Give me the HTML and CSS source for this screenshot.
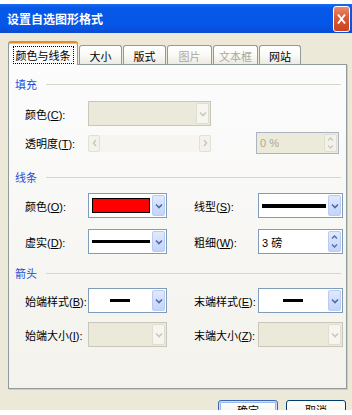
FILE: index.html
```html
<!DOCTYPE html>
<html lang="zh-CN">
<head>
<meta charset="utf-8">
<title>设置自选图形格式</title>
<link rel="stylesheet" href="styles.css">
</head>
<body>
<div class="dialog">
  <div class="titlebar">
    <span class="title">设置自选图形格式</span>
    <span class="close"><svg width="9" height="12" viewBox="0 0 9 12"><path d="M1 1.5L8 10.5M8 1.5L1 10.5" fill="none" stroke="#fff" stroke-width="2"/></svg></span>
  </div>
  <div class="client">
    <div class="tabs">
      <div class="tab active"><span class="focus">颜色与线条</span></div>
      <div class="tab w43">大小</div>
      <div class="tab w43">版式</div>
      <div class="tab w45 off">图片</div>
      <div class="tab w45 off">文本框</div>
      <div class="tab w42">网站</div>
    </div>
    <div class="panel">
      <div class="group-head g1"><span>填充</span><i></i></div>
      <div class="grid fill">
        <label>颜色(<u>C</u>):</label>
        <div class="combo disabled"><span class="field"></span><span class="drop"><svg width="8" height="6" viewBox="0 0 8 6"><path d="M1 1.5L4 4.5L7 1.5" fill="none" stroke="currentColor" stroke-width="1.6"/></svg></span></div>
        <label class="r2">透明度(<u>T</u>):</label>
        <div class="slider r2c2">
          <span class="sb"><svg width="5" height="8" viewBox="0 0 5 8"><path d="M4 1L1.5 4L4 7" fill="none" stroke="currentColor" stroke-width="1.4"/></svg></span>
          <span class="track"></span>
          <span class="sb"><svg width="5" height="8" viewBox="0 0 5 8"><path d="M1 1L3.5 4L1 7" fill="none" stroke="currentColor" stroke-width="1.4"/></svg></span>
        </div>
        <div class="spin disabled r2c4">
          <span class="val">0 %</span>
          <span class="btns">
            <span class="half"><svg width="7" height="4" viewBox="0 0 7 4"><path d="M1 3.5L3.5 1L6 3.5" fill="none" stroke="currentColor" stroke-width="1.3"/></svg></span>
            <span class="half"><svg width="7" height="4" viewBox="0 0 7 4"><path d="M1 0.5L3.5 3L6 0.5" fill="none" stroke="currentColor" stroke-width="1.3"/></svg></span>
          </span>
        </div>
      </div>

      <div class="group-head g2"><span>线条</span><i></i></div>
      <div class="grid lines">
        <label>颜色(<u>O</u>):</label>
        <div class="combo"><span class="field"><span class="swatch"></span></span><span class="drop"><svg width="8" height="6" viewBox="0 0 8 6"><path d="M1 1.5L4 4.5L7 1.5" fill="none" stroke="currentColor" stroke-width="1.6"/></svg></span></div>
        <label class="c4">线型(<u>S</u>):</label>
        <div class="combo"><span class="field"><span class="ln thick"></span></span><span class="drop"><svg width="8" height="6" viewBox="0 0 8 6"><path d="M1 1.5L4 4.5L7 1.5" fill="none" stroke="currentColor" stroke-width="1.6"/></svg></span></div>
        <label>虚实(<u>D</u>):</label>
        <div class="combo"><span class="field"><span class="ln"></span></span><span class="drop"><svg width="8" height="6" viewBox="0 0 8 6"><path d="M1 1.5L4 4.5L7 1.5" fill="none" stroke="currentColor" stroke-width="1.6"/></svg></span></div>
        <label class="c4">粗细(<u>W</u>):</label>
        <div class="spin">
          <span class="val">3 磅</span>
          <span class="btns">
            <span class="half"><svg width="7" height="4" viewBox="0 0 7 4"><path d="M1 3.5L3.5 1L6 3.5" fill="none" stroke="currentColor" stroke-width="1.3"/></svg></span>
            <span class="half"><svg width="7" height="4" viewBox="0 0 7 4"><path d="M1 0.5L3.5 3L6 0.5" fill="none" stroke="currentColor" stroke-width="1.3"/></svg></span>
          </span>
        </div>
      </div>

      <div class="group-head g3"><span>箭头</span><i></i></div>
      <div class="grid arrows">
        <label>始端样式(<u>B</u>):</label>
        <div class="combo"><span class="field"><span class="short"></span></span><span class="drop"><svg width="8" height="6" viewBox="0 0 8 6"><path d="M1 1.5L4 4.5L7 1.5" fill="none" stroke="currentColor" stroke-width="1.6"/></svg></span></div>
        <label class="c4">末端样式(<u>E</u>):</label>
        <div class="combo"><span class="field"><span class="short"></span></span><span class="drop"><svg width="8" height="6" viewBox="0 0 8 6"><path d="M1 1.5L4 4.5L7 1.5" fill="none" stroke="currentColor" stroke-width="1.6"/></svg></span></div>
        <label>始端大小(<u>I</u>):</label>
        <div class="combo disabled"><span class="field"></span><span class="drop"><svg width="8" height="6" viewBox="0 0 8 6"><path d="M1 1.5L4 4.5L7 1.5" fill="none" stroke="currentColor" stroke-width="1.6"/></svg></span></div>
        <label class="c4">末端大小(<u>Z</u>):</label>
        <div class="combo disabled"><span class="field"></span><span class="drop"><svg width="8" height="6" viewBox="0 0 8 6"><path d="M1 1.5L4 4.5L7 1.5" fill="none" stroke="currentColor" stroke-width="1.6"/></svg></span></div>
      </div>
    </div>
    <div class="buttons">
      <span class="btn default">确定</span>
      <span class="btn">取消</span>
    </div>
  </div>
</div>
</body>
</html>
```

FILE: styles.css
```css
* { box-sizing: border-box; }
body {
  margin: 0;
  background: #fff;
  font-family: "Liberation Sans", "Noto Sans CJK SC", sans-serif;
  font-size: 11px;
  color: #000;
}
.dialog {
  width: 352px;
  height: 406px;
  margin-top: 4px;
  overflow: hidden;
  background: #ece9d8;
  display: flex;
  flex-direction: column;
}
.titlebar {
  flex: none;
  height: 29px;
  display: flex;
  align-items: center;
  justify-content: space-between;
  padding: 0 2px 0 7px;
  background: linear-gradient(#1a6af0, #0558e8 15%, #0556e6 75%, #0a4bd2);
  color: #fff;
}
.title {
  font-family: "Noto Sans CJK SC", sans-serif;
  font-weight: bold;
  font-size: 12px;
}
.close {
  width: 17px;
  height: 26px;
  border: 1px solid #fff;
  border-radius: 3px;
  background: linear-gradient(#ec8a6a, #dc5a35 45%, #c9431f);
  display: flex;
  align-items: center;
  justify-content: center;
}
.client {
  flex: 1;
  display: flex;
  flex-direction: column;
  padding: 0 5px 0 8px;
}
.tabs {
  height: 31px;
  display: flex;
  align-items: flex-end;
  gap: 1px;
}
.tab {
  height: 19px;
  border: 1px solid #919b9c;
  border-bottom: 0;
  border-radius: 3px 3px 0 0;
  background: linear-gradient(#ffffff, #fafaf7 50%, #eceae3);
  display: flex;
  align-items: center;
  justify-content: center;
  padding-top: 1px;
  font-family: "Noto Sans CJK SC", sans-serif;
  font-size: 11px;
}
.w43 { width: 43px; }
.w45 { width: 45px; }
.w42 { width: 42px; }
.tab.off { color: #aca899; }
.tab.active {
  width: 70px;
  height: 24px;
  margin-bottom: -1px;
  position: relative;
  z-index: 1;
  border-top: 2px solid #e68b2c;
  box-shadow: inset 0 1px 0 #ffc83c;
  background: #fcfcfd;
  padding-top: 2px;
}
.focus {
  outline: 1px dotted #000;
  padding: 1px 2px;
  line-height: 14px;
}
.panel {
  height: 325px;
  border: 1px solid #919b9c;
  background: linear-gradient(#fcfcfd, #f3f2ec);
  box-shadow: 1px 1px 0 #cfcdc0;
  display: flex;
  flex-direction: column;
}
.group-head {
  display: flex;
  align-items: center;
  height: 14px;
  padding: 0 5px 0 6px;
  color: #1e4fd2;
  font-family: "Noto Sans CJK SC", sans-serif;
  font-size: 11px;
}
.group-head i {
  flex: 1;
  height: 1px;
  margin-left: 9px;
  background: #d8d6ca;
}
.g1 { margin-top: 12px; }
.g2 { margin-top: 16px; }
.g3 { margin-top: 12px; }
.grid {
  display: grid;
  padding-left: 16px;
  align-items: center;
}
.grid label { white-space: nowrap; }
.grid.fill {
  grid-template-columns: 63px 123px 45px 83px;
  grid-template-rows: 25px 22px;
  row-gap: 6px;
  margin-top: 10px;
}
.grid.lines {
  grid-template-columns: 63px 79px 27px 64px 85px;
  grid-template-rows: 25px 25px;
  row-gap: 11px;
  margin-top: 9px;
}
.grid.arrows {
  grid-template-columns: 63px 79px 27px 64px 85px;
  grid-template-rows: 25px 25px;
  row-gap: 9px;
  margin-top: 8px;
}
.c4 { grid-column: 4; }
.r2 { grid-column: 1; grid-row: 2; }
.r2c2 { grid-column: 2; grid-row: 2; }
.r2c4 { grid-column: 4; grid-row: 2; }

.combo {
  height: 25px;
  display: flex;
  border: 1px solid #7f9db9;
  background: #fff;
}
.combo .field {
  flex: 1;
  display: flex;
  align-items: center;
  justify-content: center;
}
.drop {
  width: 13px;
  margin: 1px;
  border: 1px solid #b9cbf3;
  border-radius: 2px;
  background: linear-gradient(#e0e9fd, #c3d4fa);
  color: #4d69a8;
  display: flex;
  align-items: center;
  justify-content: center;
}
.combo.disabled {
  background: #ebe9da;
  border-color: #c9c7ba;
}
.combo.disabled .drop {
  background: #f6f5ef;
  border-color: #e0ded2;
  color: #c9c7ba;
}
.swatch {
  flex: 1;
  align-self: stretch;
  margin: 4px 1px 4px 3px;
  background: #f00;
  border: 1px solid #000;
}
.ln {
  flex: 1;
  height: 3px;
  margin: 0 1px 0 3px;
  background: #000;
}
.ln.thick { height: 4px; }
.short {
  width: 20px;
  height: 3px;
  background: #000;
}
.slider {
  height: 17px;
  display: flex;
  background: #f6f5f0;
}
.slider .track { flex: 1; }
.slider .sb {
  width: 12px;
  border: 1px solid #e2e0d4;
  border-radius: 2px;
  background: #f3f2eb;
  color: #c9c7ba;
  display: flex;
  align-items: center;
  justify-content: center;
}
.spin {
  height: 25px;
  display: flex;
  border: 1px solid #7f9db9;
  background: #fff;
}
.spin .val {
  flex: 1;
  display: flex;
  align-items: center;
  padding-left: 3px;
  font-family: "Liberation Sans", "Noto Sans CJK SC", sans-serif;
  white-space: pre;
}
.spin .btns {
  width: 13px;
  margin: 1px;
  display: flex;
  flex-direction: column;
  border: 1px solid #b9cbf3;
  border-radius: 2px;
  background: linear-gradient(#e0e9fd, #c3d4fa);
  color: #4d69a8;
}
.spin .half {
  flex: 1;
  display: flex;
  align-items: center;
  justify-content: center;
}
.spin.disabled {
  height: 22px;
  background: #ecead9;
  border-color: #aab4c4;
  color: #aca899;
}
.spin.disabled .btns {
  background: #f3f2ea;
  border-color: #e0ded2;
  color: #c9c7ba;
}
.buttons {
  display: flex;
  justify-content: flex-end;
  gap: 8px;
  margin-top: 11px;
  padding-right: 1px;
}
.btn {
  width: 60px;
  height: 20px;
  border: 1px solid #003c74;
  border-radius: 3px;
  background: linear-gradient(#ffffff, #f3f3ef 70%, #dcd8ce);
  display: flex;
  align-items: center;
  justify-content: center;
  font-family: "Noto Sans CJK SC", sans-serif;
  font-size: 11px;
}
.btn.default {
  border-color: #3a63b5;
  box-shadow: inset 0 0 0 1px #cee0fb, inset 0 0 0 2px #98b8ea;
}
```
